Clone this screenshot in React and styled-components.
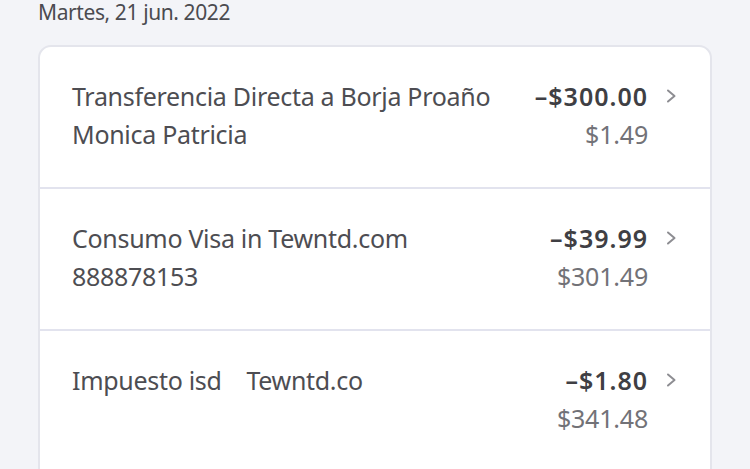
import styled, { createGlobalStyle } from 'styled-components';

const GlobalStyle = createGlobalStyle`
  html, body {
    margin: 0;
    padding: 0;
    background: #f3f4f8;
    font-family: "Noto Sans", "Open Sans", sans-serif;
  }
`;

const Page = styled.div`
  width: 750px;
  height: 469px;
  overflow: hidden;
  box-sizing: border-box;
  padding: 0 38px;
  background: #f3f4f8;
`;

const DateLabel = styled.div`
  font-size: 21px;
  line-height: 24px;
  height: 24px;
  color: #4b4b50;
  letter-spacing: -0.4px;
  margin-bottom: 21px;
`;

const Card = styled.div`
  background: #ffffff;
  border: 2px solid #e4e5ec;
  border-radius: 13px;
  overflow: hidden;
`;

const Row = styled.div`
  display: flex;
  align-items: flex-start;
  height: 76px;
  padding: 30px 33px ${p => (p.$last ? '60px' : '34px')} 32px;
  border-top: ${p => (p.$first ? 'none' : '2px solid #e2e3ee')};
`;

const Info = styled.div`
  flex: 1;
  min-width: 0;
  font-size: 25px;
  line-height: 38px;
  color: #4d4d52;
  letter-spacing: -0.3px;
  white-space: pre;
`;

const Amounts = styled.div`
  display: flex;
  flex-direction: column;
  align-items: flex-end;
  font-size: 25px;
  line-height: 38px;
`;

const Amount = styled.div`
  font-weight: 600;
  color: #3f3f44;
  letter-spacing: 1px;
`;

const Balance = styled.div`
  color: #727277;
  letter-spacing: -0.2px;
`;

const Chevron = styled.div`
  width: 12px;
  height: 38px;
  margin-left: 17px;
  display: flex;
  align-items: center;
`;

const ChevronIcon = () => (
  <svg width="12" height="16" viewBox="0 0 12 16">
    <path d="M3 2.5 L9.5 8 L3 13.5" fill="none" stroke="#8d8d92" strokeWidth="2" strokeLinecap="round" strokeLinejoin="round" />
  </svg>
);

const rows = [
  { title: 'Transferencia Directa a Borja Proaño', sub: 'Monica Patricia', amount: '–$300.00', balance: '$1.49' },
  { title: 'Consumo Visa in Tewntd.com', sub: '888878153', amount: '–$39.99', balance: '$301.49' },
  { title: 'Impuesto isd    Tewntd.co', sub: '', amount: '–$1.80', balance: '$341.48' },
];

const App = () => {
  return (
    <Page>
      <GlobalStyle />
      <DateLabel>Martes, 21 jun. 2022</DateLabel>
      <Card>
        {rows.map((r, i) => (
          <Row key={i} $first={i === 0} $last={i === rows.length - 1}>
            <Info>
              <div>{r.title}</div>
              {r.sub && <div>{r.sub}</div>}
            </Info>
            <Amounts>
              <Amount>{r.amount}</Amount>
              <Balance>{r.balance}</Balance>
            </Amounts>
            <Chevron><ChevronIcon /></Chevron>
          </Row>
        ))}
      </Card>
    </Page>
  );
};

export default App;
